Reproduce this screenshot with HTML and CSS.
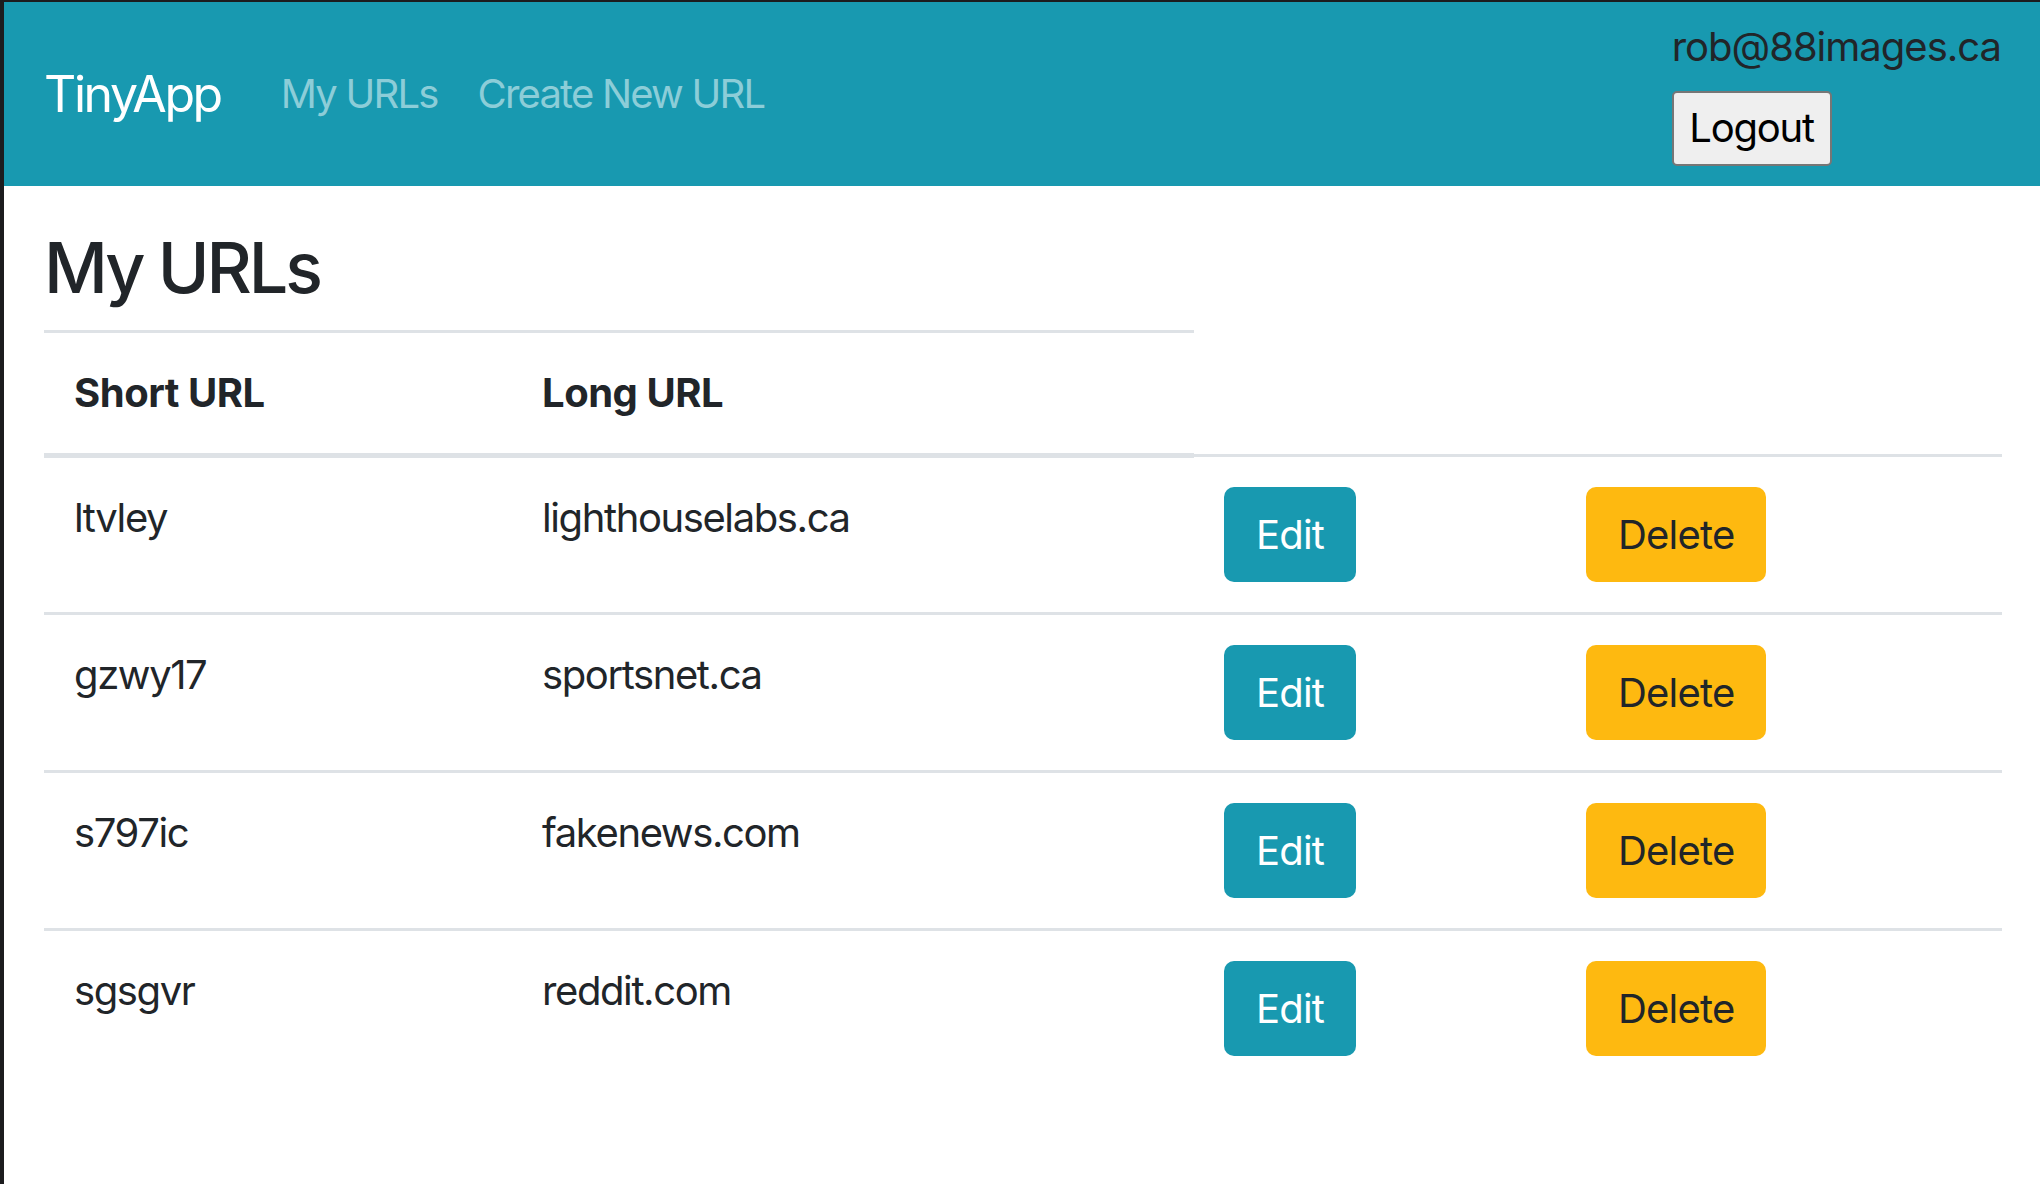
FILE: index.html
```html
<!DOCTYPE html>
<html lang="en">
<head>
<meta charset="utf-8">
<title>TinyApp - My URLs</title>
<link rel="stylesheet" href="styles.css">
</head>
<body>
<div class="frame">
  <nav class="navbar">
    <div class="nav-left">
      <a class="brand" href="#">TinyApp</a>
      <a class="nav-link" href="#">My URLs</a>
      <a class="nav-link" href="#">Create New URL</a>
    </div>
    <div class="nav-right">
      <div class="email">rob@88images.ca</div>
      <button class="logout" type="button">Logout</button>
    </div>
  </nav>
  <main class="content">
    <h1 class="title">My URLs</h1>
    <table class="urls">
      <colgroup>
        <col class="c1"><col class="c2"><col class="c3"><col class="c4">
      </colgroup>
      <thead>
        <tr><th>Short URL</th><th>Long URL</th></tr>
      </thead>
      <tbody>
        <tr><td>ltvley</td><td>lighthouselabs.ca</td><td><button class="btn btn-edit">Edit</button></td><td><button class="btn btn-delete">Delete</button></td></tr>
        <tr><td>gzwy17</td><td>sportsnet.ca</td><td><button class="btn btn-edit">Edit</button></td><td><button class="btn btn-delete">Delete</button></td></tr>
        <tr><td>s797ic</td><td>fakenews.com</td><td><button class="btn btn-edit">Edit</button></td><td><button class="btn btn-delete">Delete</button></td></tr>
        <tr><td>sgsgvr</td><td>reddit.com</td><td><button class="btn btn-edit">Edit</button></td><td><button class="btn btn-delete">Delete</button></td></tr>
      </tbody>
    </table>
  </main>
</div>
</body>
</html>
```

FILE: styles.css
```css
* { box-sizing: border-box; }
html, body { margin: 0; padding: 0; background: #1c1c1e; }
body {
  font-family: Inter, "Noto Sans", "Liberation Sans", sans-serif;
  color: #212529;
  font-size: 40px;
  line-height: 60px;
  letter-spacing: -0.035em;
}
.frame {
  height: 1184px;
  margin-left: 4px;
  margin-top: 2px;
  background: #ffffff;
  overflow: hidden;
}
.navbar {
  display: flex;
  justify-content: space-between;
  align-items: center;
  background: #1899b0;
  padding: 20px 39px 20px 40px;
  height: 184px;
}
.nav-left { display: flex; align-items: center; }
.brand {
  color: #ffffff;
  text-decoration: none;
  font-size: 50px;
  line-height: 75px;
  margin-right: 40px;
  letter-spacing: -0.048em;
}
.nav-link {
  color: #8ccdd8;
  text-decoration: none;
  padding: 20px 20px;
  font-size: 40px;
  line-height: 60px;
  letter-spacing: -0.045em;
}
.nav-right { display: flex; flex-direction: column; align-items: flex-start; }
.email {
  line-height: 48px;
  margin-bottom: 20px;
  color: #212529;
  letter-spacing: -0.025em;
}
.logout {
  font-family: inherit;
  font-size: 40px;
  line-height: 60px;
  letter-spacing: -0.03em;
  height: 75px;
  width: 160px;
  padding: 0;
  color: #000000;
  background: #efefef;
  border: 2px solid #767676;
  border-radius: 5px;
}
.content { padding: 40px 38px 0 40px; }
.title {
  margin: 0 0 20px 0;
  font-size: 70px;
  line-height: 84px;
  font-weight: 500;
  letter-spacing: -0.045em;
}
.urls { width: 100%; border-collapse: collapse; }
.c1 { width: 468px; }
.c2 { width: 682px; }
.c3 { width: 362px; }
.c4 { width: 446px; }
.urls th {
  text-align: left;
  font-weight: 700;
  letter-spacing: -0.012em;
  padding: 30px;
  border-top: 3px solid #dee2e6;
  border-bottom: 5px solid #dee2e6;
  vertical-align: bottom;
}
.urls td {
  padding: 30px;
  border-top: 3px solid #dee2e6;
  vertical-align: top;
}
.btn {
  font-family: inherit;
  font-size: 40px;
  line-height: 60px;
  letter-spacing: -0.02em;
  height: 95px;
  padding: 0 30px;
  border: 2px solid transparent;
  border-radius: 10px;
  display: inline-block;
}
.btn-edit { background: #1899b0; color: #ffffff; }
.btn-delete { background: #feb910; color: #212529; }
```
